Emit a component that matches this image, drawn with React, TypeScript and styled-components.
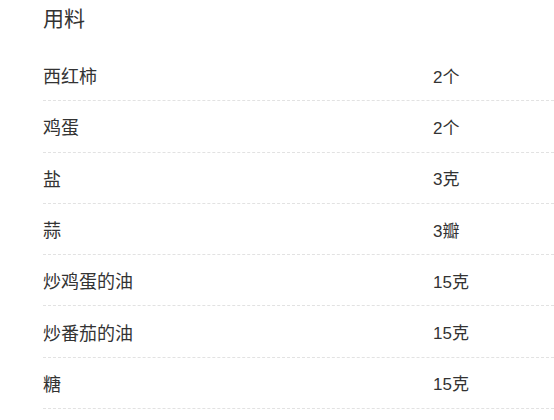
import React from 'react';
import styled, { createGlobalStyle } from 'styled-components';

interface Ingredient {
  name: string;
  amount: string;
}

const ingredients: Ingredient[] = [
  { name: '西红柿', amount: '2个' },
  { name: '鸡蛋', amount: '2个' },
  { name: '盐', amount: '3克' },
  { name: '蒜', amount: '3瓣' },
  { name: '炒鸡蛋的油', amount: '15克' },
  { name: '炒番茄的油', amount: '15克' },
  { name: '糖', amount: '15克' },
];

const GlobalStyle = createGlobalStyle`
  body {
    margin: 0;
    background: #fff;
    font-family: "Liberation Sans", "Noto Sans CJK SC", sans-serif;
    color: #333;
  }
`;

const App = (): JSX.Element => {
  return (
    <>
      <GlobalStyle />
      <StyledRecipe>
        <Heading>用料</Heading>
        <List>
          {ingredients.map(({ name, amount }) => (
            <Row key={name}>
              <Name>{name}</Name>
              <Amount>{amount}</Amount>
            </Row>
          ))}
        </List>
      </StyledRecipe>
    </>
  );
};

const StyledRecipe = styled.div`
  padding-left: 43px;
  width: 554px;
  box-sizing: border-box;
`;

const Heading = styled.h2`
  margin: 0;
  height: 50px;
  padding-top: 6px;
  box-sizing: border-box;
  font-size: 21px;
  line-height: 26px;
  font-weight: 400;
  color: #333;
`;

const List = styled.div`
  display: flex;
  flex-direction: column;
`;

const Row = styled.div`
  display: grid;
  grid-template-columns: 390px 1fr;
  align-items: center;
  height: 51.3px;
  box-sizing: border-box;
  border-bottom: 1px dashed #e2e2e2;
  font-size: 18px;
`;

const Name = styled.span`
  color: #333;
`;

const Amount = styled.span`
  color: #333;
  font-size: 17px;
`;

export default App;
